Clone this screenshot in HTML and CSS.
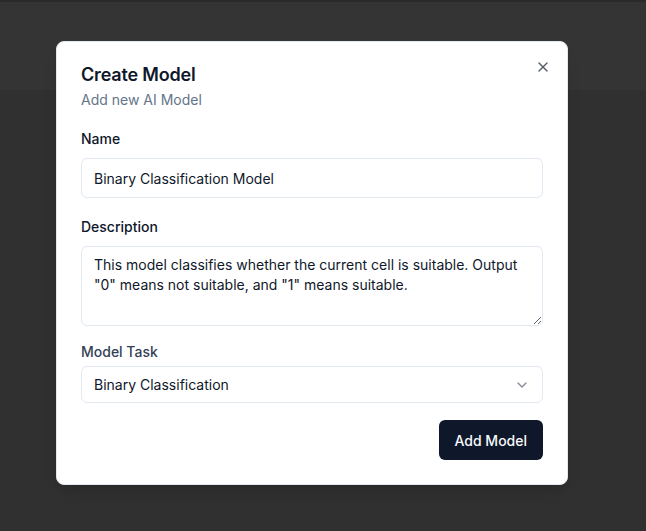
FILE: index.html
```html
<!DOCTYPE html>
<html lang="en">
  <head>
    <meta charset="UTF-8" />
    <title>Create Model</title>
    <link rel="stylesheet" href="styles.css">
  </head>
  <body>
    <div class="page">
      <div class="topbar"></div>
    </div>

    <div class="dialog">
      <button class="close" aria-label="Close">
        <svg width="16" height="16" viewBox="0 0 24 24" fill="none" stroke="currentColor" stroke-width="2" stroke-linecap="round" stroke-linejoin="round">
          <path d="M18 6 6 18" />
          <path d="m6 6 12 12" />
        </svg>
      </button>

      <div class="dialog-header">
        <h2 class="title">Create Model</h2>
        <p class="subtitle">Add new AI Model</p>
      </div>

      <form class="form">
        <div class="field">
          <label class="label" for="name">Name</label>
          <input class="input" id="name" type="text" value="Binary Classification Model" />
        </div>

        <div class="field">
          <label class="label" for="desc">Description</label>
          <textarea class="textarea" id="desc">This model classifies whether the current cell is suitable. Output "0" means not suitable, and "1" means suitable.</textarea>
        </div>

        <div class="field field-select">
          <label class="label label-muted">Model Task</label>
          <div class="select">
            <span>Binary Classification</span>
            <svg class="chevron" width="16" height="16" viewBox="0 0 24 24" fill="none" stroke="currentColor" stroke-width="2" stroke-linecap="round" stroke-linejoin="round">
              <path d="m6 9 6 6 6-6" />
            </svg>
          </div>
        </div>

        <div class="actions">
          <button class="btn" type="button">Add Model</button>
        </div>
      </form>
    </div>
  </body>
</html>
```

FILE: styles.css
```css
* {
    box-sizing: border-box;
}

html, body {
    margin: 0;
    height: 100%;
}

body {
    font-family: Inter, 'Noto Sans', sans-serif;
    background: #303030;
    color: #0f172a;
    overflow: hidden;
}

.page {
    height: 100%;
}

.topbar {
    height: 90px;
    background: #343434;
    border-top: 2px solid #2a2a2a;
}

.dialog {
    position: absolute;
    left: 56px;
    top: 41px;
    width: 512px;
    background: #ffffff;
    border: 1px solid #e2e8f0;
    border-radius: 8px;
    padding: 24px 24px 24px;
    box-shadow: 0 10px 15px -3px rgba(0, 0, 0, 0.1), 0 4px 6px -4px rgba(0, 0, 0, 0.1);
}

.close {
    position: absolute;
    top: 17px;
    right: 16px;
    width: 16px;
    height: 16px;
    padding: 0;
    border: none;
    background: none;
    color: #0f172a;
    opacity: 0.7;
    display: flex;
}

.dialog-header {
    display: flex;
    flex-direction: column;
    gap: 6px;
}

.title {
    margin: 0;
    font-size: 18px;
    line-height: 18px;
    font-weight: 600;
    letter-spacing: -0.01em;
}

.subtitle {
    margin: 0;
    font-size: 14px;
    line-height: 20px;
    color: #64748b;
}

.form {
    margin-top: 22px;
    display: flex;
    flex-direction: column;
}

.field {
    display: flex;
    flex-direction: column;
    gap: 12px;
    margin-bottom: 22px;
}

.field-select {
    gap: 7px;
    margin-bottom: 16px;
}

.label {
    font-size: 14px;
    line-height: 14px;
    font-weight: 500;
}

.label-muted {
    color: #334155;
}

.input,
.textarea,
.select {
    width: 100%;
    font-family: inherit;
    font-size: 14px;
    color: #0f172a;
    background: #ffffff;
    border: 1px solid #e2e8f0;
    border-radius: 6px;
}

.input {
    height: 40px;
    padding: 0 12px;
}

.textarea {
    display: block;
    height: 80px;
    padding: 8px 12px;
    line-height: 20px;
    resize: vertical;
    margin-bottom: -3px;
}

.select {
    height: 37px;
    padding: 0 12px;
    display: flex;
    align-items: center;
    justify-content: space-between;
}

.chevron {
    opacity: 0.5;
}

.actions {
    display: flex;
    justify-content: flex-end;
    margin-top: 1px;
}

.btn {
    height: 40px;
    padding: 0 16px;
    font-family: inherit;
    font-size: 14px;
    font-weight: 500;
    color: #f8fafc;
    background: #0f172a;
    border: none;
    border-radius: 6px;
}
```
